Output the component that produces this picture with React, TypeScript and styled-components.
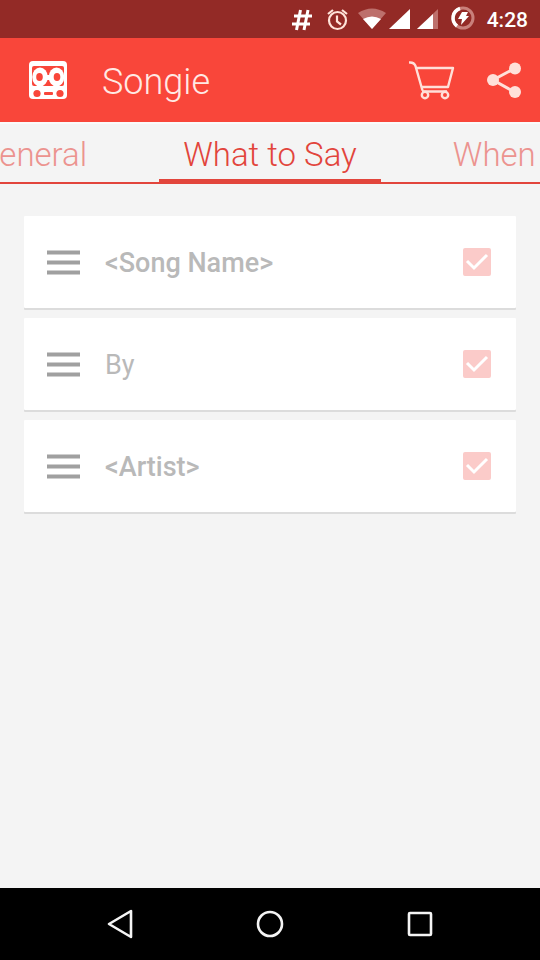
import React from "react";
import styled, { createGlobalStyle } from "styled-components";

const GlobalStyle = createGlobalStyle`
  *, *::before, *::after { box-sizing: border-box; }
  body {
    margin: 0;
    background: #f4f4f4;
    font-family: Roboto, "Liberation Sans", sans-serif;
  }
  button { font: inherit; color: inherit; background: none; border: 0; padding: 0; margin: 0; cursor: pointer; }
  svg { display: block; flex: none; }
`;

const Screen = styled.div`
  min-height: 100vh;
  display: flex;
  flex-direction: column;
`;

const StatusBar = styled.div`
  height: 38px;
  padding: 0 12px 0 0;
  display: flex;
  align-items: center;
  justify-content: flex-end;
  background: #932a26;
  color: #ffffff;
`;

const Clock = styled.time`
  margin-left: 12px;
  padding-top: 2px;
  font-size: 21px;
  line-height: 24px;
  font-weight: 500;
`;

const AppBar = styled.header`
  height: 84px;
  padding: 0 16px 0 28px;
  display: flex;
  align-items: center;
  background: #f9463a;
  color: #ffe9e4;
`;

const AppTitle = styled.h1`
  flex: 1;
  margin: 0 0 0 34px;
  padding-top: 4px;
  font-size: 36px;
  line-height: 44px;
  font-weight: 300;
`;

const IconButton = styled.button`
  display: flex;
  margin-left: 31px;
`;

const TabStrip = styled.div`
  height: 62px;
  display: grid;
  grid-template-columns: minmax(0, 1fr) auto minmax(0, 1fr);
  background: #f4f4f4;
  border-top: 2px solid #fafafa;
  box-shadow: inset 0 -2px #e2453c;
`;

const Tab = styled.button<{ $active?: boolean; $align?: "start" | "end" }>`
  display: flex;
  align-items: center;
  justify-content: ${(p) => (p.$active ? "center" : `flex-${p.$align}`)};
  padding: ${(p) => (p.$active ? "7px 24px 0" : "7px 72px 0")};
  padding-left: ${(p) => p.$align === "end" && "0"};
  padding-right: ${(p) => p.$align === "start" && "0"};
  overflow: hidden;
  white-space: nowrap;
  font-size: 33px;
  line-height: 40px;
  font-weight: 300;
  color: ${(p) => (p.$active ? "#e2453c" : "#ec938f")};
  border-bottom: ${(p) => (p.$active ? "5px solid #e2453c" : "5px solid transparent")};
`;

const ItemList = styled.ul`
  flex: 1;
  margin: 0;
  padding: 32px 24px;
  list-style: none;
  display: flex;
  flex-direction: column;
  gap: 10px;
`;

const ItemCard = styled.li`
  height: 92px;
  padding: 0 25px 0 23px;
  display: flex;
  align-items: center;
  background: #ffffff;
  border-radius: 1px;
  box-shadow: 0 2px #dcdcdc;
`;

const DragHandle = styled.button`
  display: flex;
  cursor: grab;
`;

const ItemLabel = styled.label<{ $strong?: boolean }>`
  flex: 1;
  margin-left: 25px;
  padding-top: 2px;
  font-size: 27px;
  line-height: 32px;
  font-weight: ${(p) => (p.$strong ? 500 : 400)};
  color: #b9b9b9;
`;

const CheckWrap = styled.span`
  display: grid;
  & > * { grid-area: 1 / 1; }
  & > svg { pointer-events: none; }
  & > input:not(:checked) + svg { visibility: hidden; }
`;

const CheckInput = styled.input`
  appearance: none;
  width: 28px;
  height: 28px;
  margin: 0;
  border: 2px solid #fbcbc9;
  border-radius: 2px;
  &:checked { background: #fbcbc9; }
`;

const NavBar = styled.nav`
  height: 72px;
  display: flex;
  justify-content: center;
  background: #000000;
  color: #f4f4f4;
`;

const NavButton = styled.button`
  flex: 0 1 150px;
  display: flex;
  align-items: center;
  justify-content: center;
`;

const StatusIcons = () => (
  <svg width="184" height="28" viewBox="291 5 184 28" fill="none" aria-hidden="true">
    <path d="M300.500 10l-4 20M308 10l-4 20M294 16h18M292 24h18" stroke="#fff" strokeWidth="3" />
    <g stroke="#ffe3d9" strokeWidth="2.200">
      <circle cx="337.500" cy="20.500" r="8.500" />
      <path d="M337 15.500v6l4 3M328 14l5-4M347 14l-5-4" />
    </g>
    <path d="M358 13q14-9 28 0L372 29z" fill="#bd706c" />
    <path d="M363 19q9-5 18 0l-9 10z" fill="#fff" />
    <path d="M389 29L410 9v20z" fill="#fff" />
    <path d="M417 29L438 9v20z" fill="#bd706c" />
    <path d="M417 29L433 14v15z" fill="#fff" />
    <circle cx="463" cy="18" r="10" stroke="#c9807b" strokeWidth="3" />
    <path d="M460 8.500a10 10 0 0 0-3 17.500" stroke="#fff" strokeWidth="3.500" />
    <path d="M462 12h6l-2 4h3l-8 9 1-6h-4z" fill="#fff" />
  </svg>
);

const CassetteLogo = () => (
  <svg width="40" height="40" viewBox="28 60 40 40" fill="none" role="img" aria-label="Songie logo">
    <rect x="29" y="61" width="38" height="38" rx="4" fill="#fff" />
    <rect x="32" y="66" width="32" height="20" rx="2" fill="#f9463a" />
    <ellipse cx="40" cy="77" rx="7.800" ry="9.500" fill="#fff" />
    <ellipse cx="56.500" cy="77" rx="7.800" ry="9.500" fill="#fff" />
    <path d="M45 75h6v5h-6z" fill="#fff" />
    <ellipse cx="39.500" cy="77" rx="3.300" ry="4" fill="#f9463a" />
    <ellipse cx="57" cy="77" rx="3.300" ry="4" fill="#f9463a" />
    <circle cx="37" cy="93.500" r="3.600" fill="#f9463a" />
    <circle cx="60" cy="93.500" r="3.600" fill="#f9463a" />
    <rect x="44" y="92" width="9" height="3" rx="1" fill="#f9463a" />
  </svg>
);

const CartIcon = () => (
  <svg width="46" height="40" viewBox="409 60 46 40" fill="none" stroke="#ffe0d9" strokeWidth="2.400" strokeLinejoin="round" aria-hidden="true">
    <path d="M409 62.500q5-.5 6.500 3.500l7 24.500M417 68h36l-5 19h-26.500M422 91.500h25" />
    <circle cx="425" cy="95" r="3.200" />
    <circle cx="445" cy="95" r="3.200" />
  </svg>
);

const ShareIcon = () => (
  <svg width="38" height="40" viewBox="486 60 38 40" fill="#ffe0d9" aria-hidden="true">
    <path d="M514.500 68.500L493 80l21.500 12" fill="none" stroke="#ffe0d9" strokeWidth="3" />
    <circle cx="515" cy="68.500" r="6" />
    <circle cx="493" cy="80" r="6" />
    <circle cx="515" cy="92" r="6" />
  </svg>
);

const HandleIcon = () => (
  <svg width="33" height="26" viewBox="0 0 33 26" fill="#a0a0a0" aria-hidden="true">
    <path d="M0 1.500h33v4H0zM0 11.500h33v4H0zM0 21.500h33v4H0z" />
  </svg>
);

const CheckMark = () => (
  <svg width="28" height="28" viewBox="0 0 28 28" fill="none" stroke="#fff" strokeWidth="3" aria-hidden="true">
    <path d="M4 13l7 7L24 7" />
  </svg>
);

const items = [
  { id: "song", text: "<Song Name>", strong: true },
  { id: "by", text: "By", strong: false },
  { id: "artist", text: "<Artist>", strong: true },
];

export default function App() {
  return (
    <>
      <GlobalStyle />
      <Screen>
        <StatusBar>
          <StatusIcons />
          <Clock>4:28</Clock>
        </StatusBar>
        <AppBar>
          <CassetteLogo />
          <AppTitle>Songie</AppTitle>
          <IconButton type="button" aria-label="Shop"><CartIcon /></IconButton>
          <IconButton type="button" aria-label="Share"><ShareIcon /></IconButton>
        </AppBar>
        <TabStrip role="tablist">
          <Tab type="button" role="tab" aria-selected={false} $align="end">General</Tab>
          <Tab type="button" role="tab" aria-selected $active>What to Say</Tab>
          <Tab type="button" role="tab" aria-selected={false} $align="start">When</Tab>
        </TabStrip>
        <ItemList>
          {items.map((item) => (
            <ItemCard key={item.id}>
              <DragHandle type="button" aria-label={`Reorder ${item.text}`}><HandleIcon /></DragHandle>
              <ItemLabel htmlFor={item.id} $strong={item.strong}>{item.text}</ItemLabel>
              <CheckWrap>
                <CheckInput id={item.id} type="checkbox" defaultChecked />
                <CheckMark />
              </CheckWrap>
            </ItemCard>
          ))}
        </ItemList>
        <NavBar aria-label="System">
          <NavButton type="button" aria-label="Back">
            <svg width="26" height="30" viewBox="0 0 26 30" fill="none" stroke="currentColor" strokeWidth="2.600" strokeLinejoin="round">
              <path d="M2 15L24 2v26z" />
            </svg>
          </NavButton>
          <NavButton type="button" aria-label="Home">
            <svg width="28" height="28" viewBox="0 0 28 28" fill="none" stroke="currentColor" strokeWidth="2.600">
              <circle cx="14" cy="14" r="12" />
            </svg>
          </NavButton>
          <NavButton type="button" aria-label="Recent apps">
            <svg width="26" height="26" viewBox="0 0 26 26" fill="none" stroke="currentColor" strokeWidth="2.600">
              <rect x="2" y="2" width="22" height="22" rx="1" />
            </svg>
          </NavButton>
        </NavBar>
      </Screen>
    </>
  );
}
